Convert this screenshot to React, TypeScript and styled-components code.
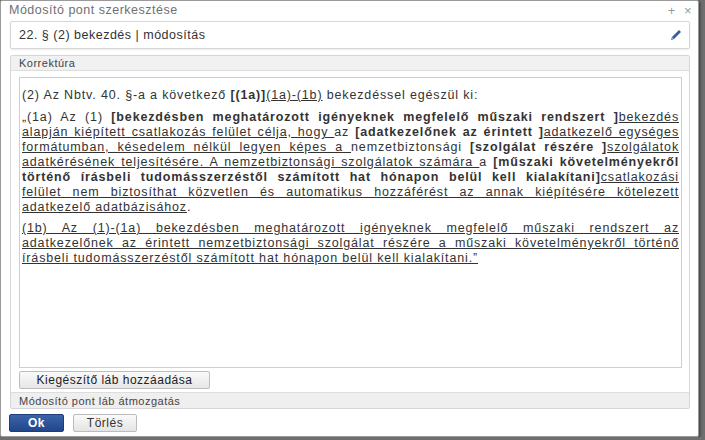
import React from "react";
import styled, { createGlobalStyle } from "styled-components";

const G = createGlobalStyle`
  html, body { margin: 0; padding: 0; background: #6f6f6f; }
  body { font-family: "Liberation Sans", Arial, sans-serif; letter-spacing: 0.5px; }
`;

const Dialog = styled.div`
  width: 699px; height: 437px; background: #fff; box-sizing: border-box;
  border: 1px solid #9a9a9a; border-radius: 2px;
  display: flex; flex-direction: column;
  box-shadow: 1px 1px 3px rgba(0,0,0,0.5);
`;
const TitleBar = styled.div`
  height: 20px; display: flex; align-items: center; justify-content: space-between;
  padding: 0 6px 0 8px; font-size: 12.5px; color: #707070;
`;
const Tools = styled.div`
  display: flex; gap: 8px; color: #999; font-size: 13px;
`;
const Body = styled.div`
  flex: 1; display: flex; flex-direction: column; padding: 2px 8px 0 9px; gap: 6px;
`;
const HeaderBox = styled.div`
  height: 26px; border: 1px solid #d6d6d6; border-radius: 2px;
  display: flex; align-items: center; justify-content: space-between;
  padding: 0 6px 0 8px; font-size: 12.5px; color: #333;
  box-shadow: 0 1px 2px rgba(0,0,0,0.08);
`;
const Panel = styled.div`
  height: 352px; border: 1px solid #d6d6d6; border-radius: 2px;
  display: flex; flex-direction: column;
`;
const PanelHead = styled.div`
  height: 14px; background: #f1f1f1; border-bottom: 1px solid #ddd;
  font-size: 11px; color: #444; padding: 0 8px; display: flex; align-items: center;
`;
const PanelFoot = styled.div`
  height: 15px; background: #efefef; border-top: 1px solid #ddd;
  font-size: 11px; color: #444; padding: 0 8px; display: flex; align-items: center;
  margin-top: auto;
`;
const Editor = styled.div`
  margin: 6px 7px 0 8px; height: 291px; border: 1px solid #cfcfcf; box-sizing: border-box;
  padding: 10px 2px 0 2px; font-size: 12.5px; letter-spacing: 0.85px; line-height: 15px; color: #333;
  text-align: justify; overflow: hidden;
`;
const P = styled.p`
  margin: 0 0 6px 0;
`;
const Ins = styled.span` text-decoration: underline; `;
const Del = styled.b` font-weight: bold; `;
const SmallBtn = styled.button`
  margin: 3px 0 0 8px; align-self: flex-start; height: 18px; width: 191px;
  font-family: inherit; font-size: 12px; letter-spacing: 0.5px; color: #222;
  background: linear-gradient(#fafafa, #e6e6e6); border: 1px solid #bdbdbd; border-radius: 2px;
`;
const Footer = styled.div`
  display: flex; gap: 9px; padding: 5px 8px 4px 8px;
`;
const Btn = styled.button<{ $primary?: boolean }>`
  height: 18px; width: ${p => (p.$primary ? 55 : 64)}px; font-family: inherit; letter-spacing: 0.5px;
  font-size: 12px; font-weight: ${p => (p.$primary ? "bold" : "normal")};
  color: ${p => (p.$primary ? "#fff" : "#333")};
  background: ${p => (p.$primary ? "linear-gradient(#3b63a8,#23468a)" : "linear-gradient(#fafafa,#e4e4e4)")};
  border: 1px solid ${p => (p.$primary ? "#1d3c78" : "#bcbcbc")}; border-radius: 2px;
`;

export default function App() {
  return (
    <>
      <G />
      <Dialog>
        <TitleBar>
          <span>Módosító pont szerkesztése</span>
          <Tools><span>+</span><span>×</span></Tools>
        </TitleBar>
        <Body>
          <HeaderBox>
            <span>22. § (2) bekezdés | módosítás</span>
            <svg width="14" height="14" viewBox="0 0 14 14">
              <path d="M2 12 L3 9 L10 2 L12 4 L5 11 Z" fill="#3a5da0" />
              <path d="M2 12 L3 9 L5 11 Z" fill="#8aa3cf" />
            </svg>
          </HeaderBox>
          <Panel>
            <PanelHead>Korrektúra</PanelHead>
            <Editor>
              <P style={{ marginBottom: 7 }}>(2) Az Nbtv. 40. §-a a következő <Del>[(1a)]</Del><Ins>(1a)-(1b)</Ins> bekezdéssel egészül ki:</P>
              <P>„(1a) Az (1) <Del>[bekezdésben meghatározott igényeknek megfelelő műszaki rendszert ]</Del><Ins>bekezdés alapján kiépített csatlakozás felület célja, hogy </Ins>az <Del>[adatkezelőnek az érintett ]</Del><Ins>adatkezelő egységes formátumban, késedelem nélkül legyen képes a </Ins>nemzetbiztonsági <Del>[szolgálat részére ]</Del><Ins>szolgálatok adatkérésének teljesítésére. A nemzetbiztonsági szolgálatok számára </Ins>a <Del>[műszaki követelményekről történő írásbeli tudomásszerzéstől számított hat hónapon belül kell kialakítani]</Del><Ins>csatlakozási felület nem biztosíthat közvetlen és automatikus hozzáférést az annak kiépítésére kötelezett adatkezelő adatbázisához</Ins>.</P>
              <P><Ins>(1b) Az (1)-(1a) bekezdésben meghatározott igényeknek megfelelő műszaki rendszert az adatkezelőnek az érintett nemzetbiztonsági szolgálat részére a műszaki követelményekről történő írásbeli tudomásszerzéstől számított hat hónapon belül kell kialakítani.”</Ins></P>
            </Editor>
            <SmallBtn>Kiegészítő láb hozzáadása</SmallBtn>
            <PanelFoot>Módosító pont láb átmozgatás</PanelFoot>
          </Panel>
        </Body>
        <Footer>
          <Btn $primary>Ok</Btn>
          <Btn>Törlés</Btn>
        </Footer>
      </Dialog>
    </>
  );
}
